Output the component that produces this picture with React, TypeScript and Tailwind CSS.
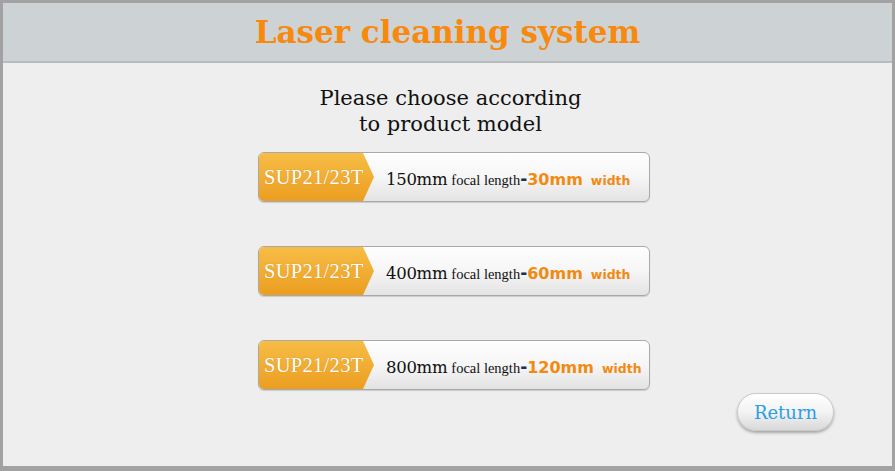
import React from 'react';

const OPTIONS = [
  { focal: '150mm', width: '30mm' },
  { focal: '400mm', width: '60mm' },
  { focal: '800mm', width: '120mm' },
];

function ModelButton({ focal, width }: { focal: string; width: string }) {
  return (
    <div className="flex h-[50px] w-[392px] overflow-hidden rounded-[6px] border border-[#a9a9a9] bg-gradient-to-b from-[#fefefe] via-[#f6f6f6] to-[#e3e3e3] shadow-[0_1px_1px_rgba(0,0,0,0.15)]">
      <div className="flex w-[115px] shrink-0 items-center bg-gradient-to-b from-[#f7bd45] to-[#eb9e1e] pl-[5px] [clip-path:polygon(0_0,104px_0,115px_50%,104px_100%,0_100%)]">
        <span className="font-['Liberation_Serif',serif] text-[20.5px] tracking-[0.3px] text-white [text-shadow:0_0_1px_rgba(150,80,0,0.4)]">SUP21/23T</span>
      </div>
      <div className="flex items-baseline pl-[12px] pt-[14px] text-[#111]">
        <span className="font-['DejaVu_Serif',serif] text-[16.5px] tracking-[-0.3px]">{focal}</span>
        <span className="ml-[4px] font-['Liberation_Serif',serif] text-[14.5px]">focal length</span>
        <span className="font-['DejaVu_Sans',sans-serif] text-[17px] font-bold text-[#1f2f4f]">-</span>
        <span className="font-['DejaVu_Sans',sans-serif] text-[16px] font-bold text-[#f28a12]">{width}</span>
        <span className="ml-[8px] font-['DejaVu_Sans',sans-serif] text-[12.5px] font-bold text-[#f28a12]">width</span>
      </div>
    </div>
  );
}

export default function App() {
  return (
    <div className="flex h-[471px] w-[895px] flex-col bg-[#a2a2a2] pb-[5px] pl-[3px] pr-[3px] pt-[3px]">
      <div className="flex h-[60px] items-center justify-center border-b-2 border-[#b8bcbe] bg-[#cdd2d5]">
        <h1 className="pt-[1px] font-['DejaVu_Serif',serif] text-[31px] font-bold tracking-[0px] text-[#f7890f]">Laser cleaning system</h1>
      </div>
      <div className="flex flex-1 flex-col bg-[#eeeeee]">
        <p className="pt-[22px] text-center font-['DejaVu_Serif',serif] text-[21px] leading-[26px] text-[#111] pl-[6px]">
          Please choose according
          <br />
          to product model
        </p>
        <div className="mt-[15px] flex flex-col gap-[44px] pl-[255px]">
          {OPTIONS.map((o) => (
            <ModelButton key={o.focal} focal={o.focal} width={o.width} />
          ))}
        </div>
        <div className="flex justify-end pr-[58px] pt-[3px]">
          <button className="h-[38px] w-[97px] rounded-full border border-[#c9c9c9] bg-gradient-to-b from-[#ffffff] via-[#f3f3f3] to-[#d9d9d9] font-['DejaVu_Serif',serif] text-[18px] text-[#2a9ee6] shadow-[0_2px_3px_rgba(0,0,0,0.3)]">
            Return
          </button>
        </div>
      </div>
    </div>
  );
}
